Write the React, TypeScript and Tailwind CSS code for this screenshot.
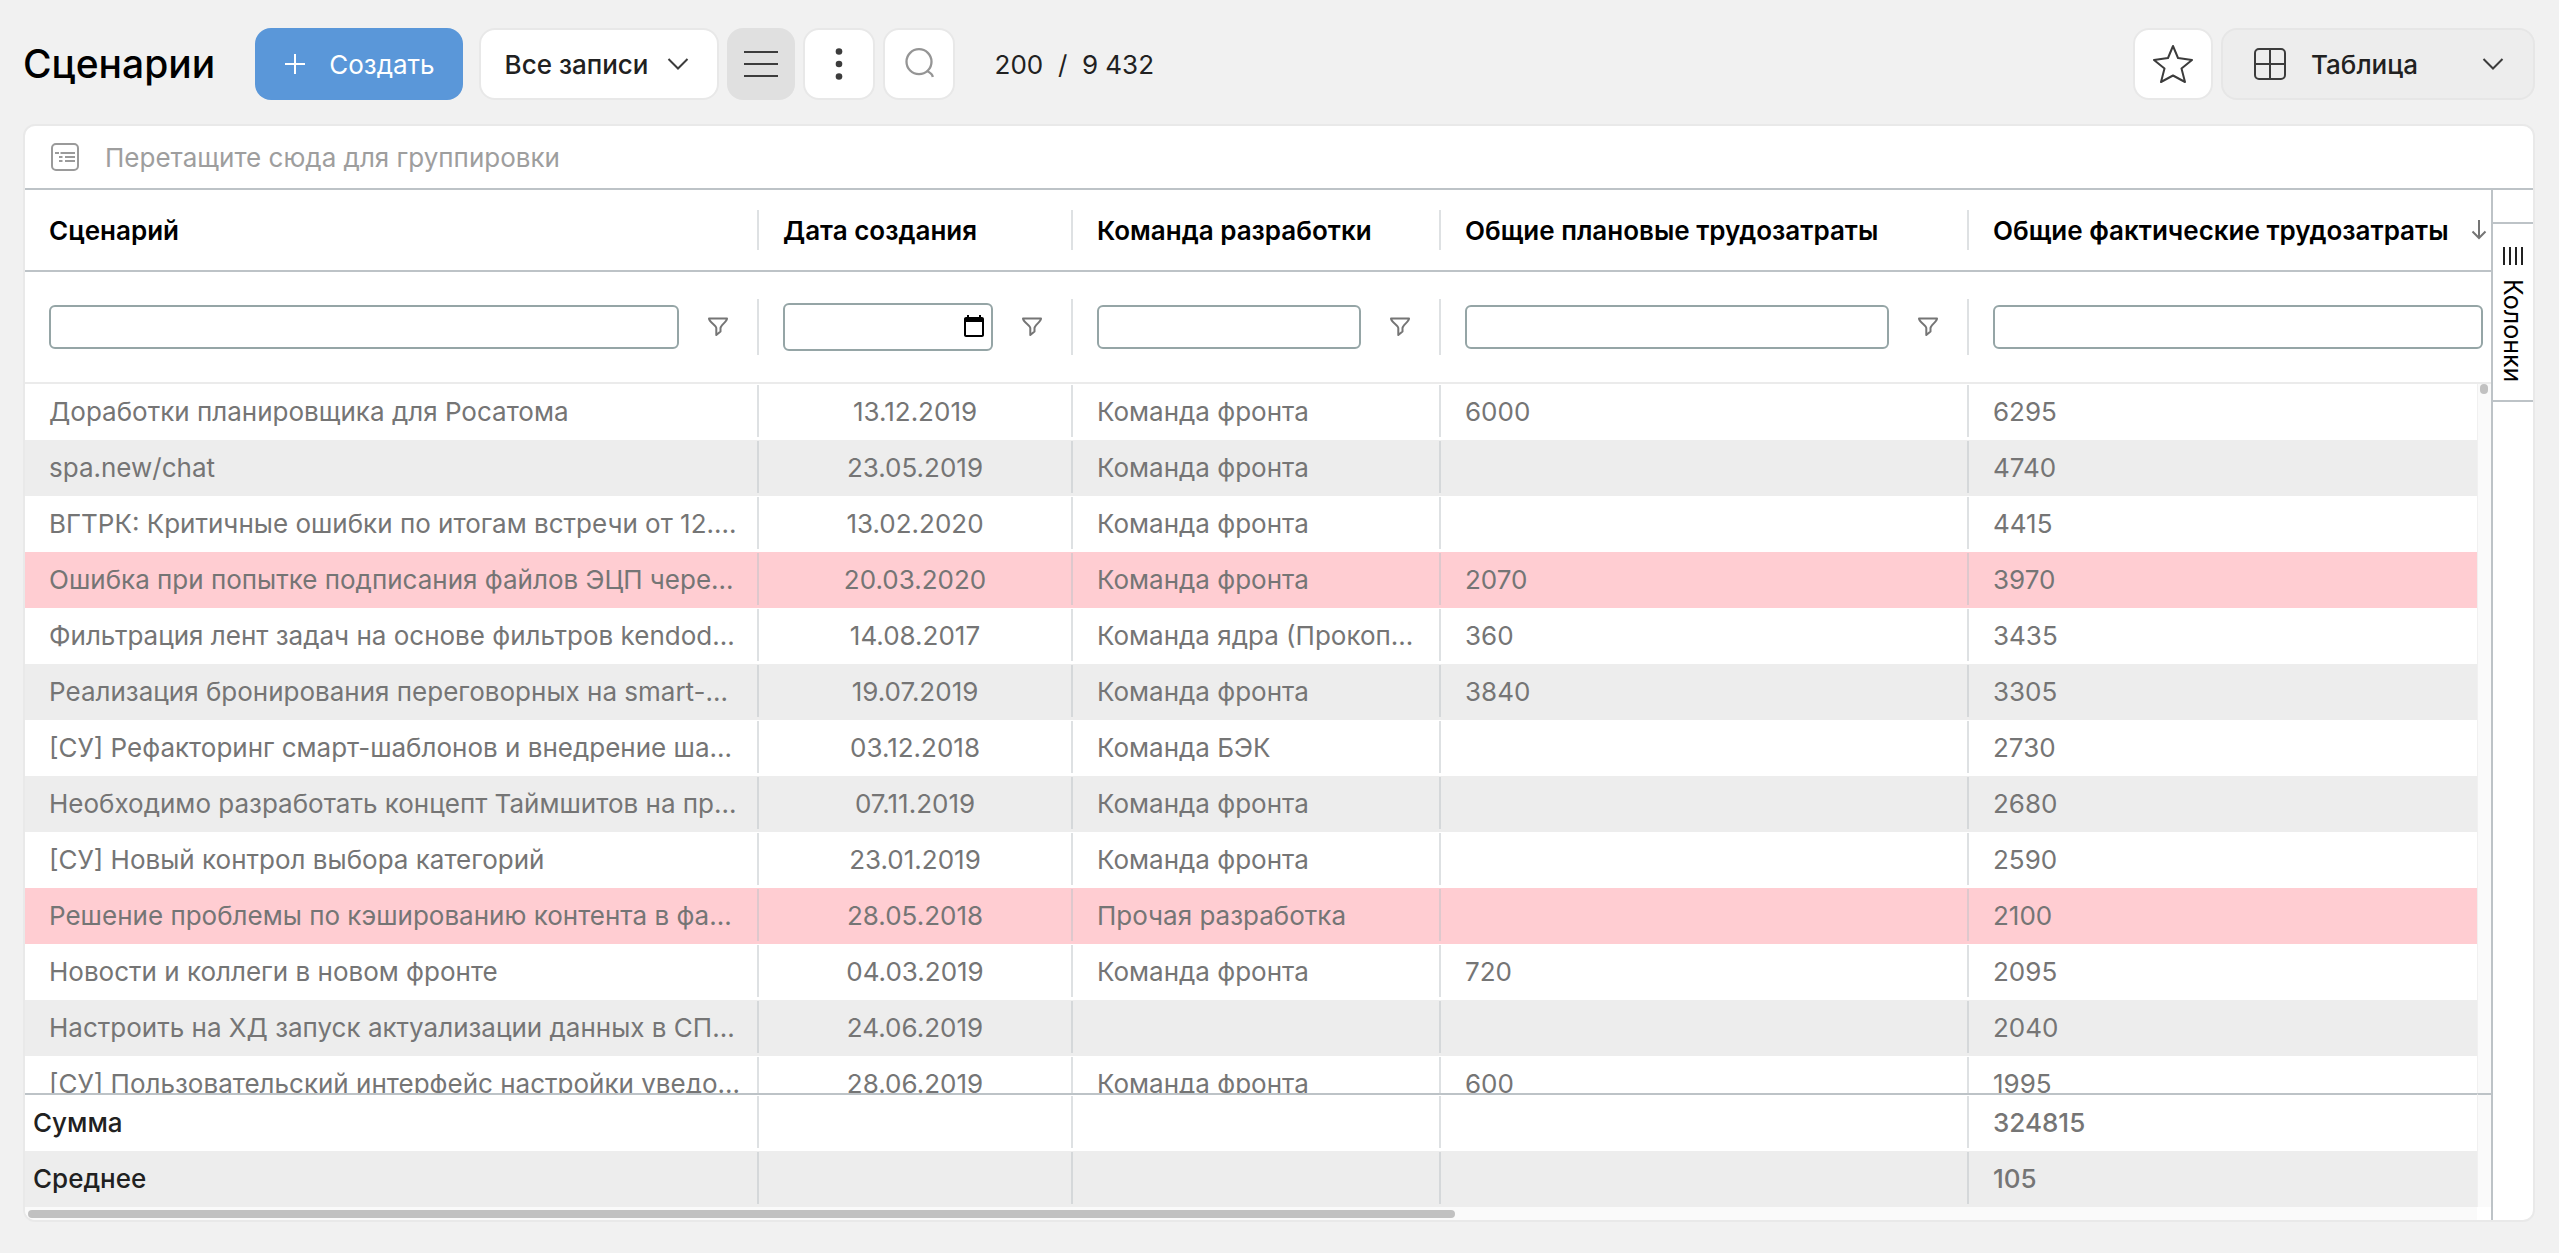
import type { ReactNode } from "react"
import { clsx } from "clsx"

type Row = {
  name: string
  date: string
  team: string
  plan: string
  fact: string
  alert?: boolean
}

const rows: Row[] = [
  { name: "Доработки планировщика для Росатома", date: "13.12.2019", team: "Команда фронта", plan: "6000", fact: "6295" },
  { name: "spa.new/chat", date: "23.05.2019", team: "Команда фронта", plan: "", fact: "4740" },
  { name: "ВГТРК: Критичные ошибки по итогам встречи от 12....", date: "13.02.2020", team: "Команда фронта", plan: "", fact: "4415" },
  { name: "Ошибка при попытке подписания файлов ЭЦП чере...", date: "20.03.2020", team: "Команда фронта", plan: "2070", fact: "3970", alert: true },
  { name: "Фильтрация лент задач на основе фильтров kendod...", date: "14.08.2017", team: "Команда ядра (Прокоп...", plan: "360", fact: "3435" },
  { name: "Реализация бронирования переговорных на smart-...", date: "19.07.2019", team: "Команда фронта", plan: "3840", fact: "3305" },
  { name: "[СУ] Рефакторинг смарт-шаблонов и внедрение ша...", date: "03.12.2018", team: "Команда БЭК", plan: "", fact: "2730" },
  { name: "Необходимо разработать концепт Таймшитов на пр...", date: "07.11.2019", team: "Команда фронта", plan: "", fact: "2680" },
  { name: "[СУ] Новый контрол выбора категорий", date: "23.01.2019", team: "Команда фронта", plan: "", fact: "2590" },
  { name: "Решение проблемы по кэшированию контента в фа...", date: "28.05.2018", team: "Прочая разработка", plan: "", fact: "2100", alert: true },
  { name: "Новости и коллеги в новом фронте", date: "04.03.2019", team: "Команда фронта", plan: "720", fact: "2095" },
  { name: "Настроить на ХД запуск актуализации данных в СП...", date: "24.06.2019", team: "", plan: "", fact: "2040" },
  { name: "[СУ] Пользовательский интерфейс настройки уведо...", date: "28.06.2019", team: "Команда фронта", plan: "600", fact: "1995" },
]

const columns = [
  { key: "name", title: "Сценарий" },
  { key: "date", title: "Дата создания" },
  { key: "team", title: "Команда разработки" },
  { key: "plan", title: "Общие плановые трудозатраты" },
  { key: "fact", title: "Общие фактические трудозатраты" },
]

function ChevronDown({ className }: { className?: string }) {
  return (
    <svg viewBox="0 0 22 12" fill="none" stroke="#3c3c3c" strokeWidth="2" className={clsx("pointer-events-none h-3 w-[22px]", className)}>
      <path d="M1.5 1 L11 10.5 L20.5 1" />
    </svg>
  )
}

function FunnelIcon() {
  return (
    <svg viewBox="0 0 20 20" fill="none" stroke="#757575" strokeWidth="2" strokeLinejoin="round" className="size-5">
      <path d="M1 1.5 H19 C19 5 12.5 8 12.5 11 V14.5 L8.3 18 V11 C8 8 1 5 1 1.5 Z" />
    </svg>
  )
}

function Toolbar() {
  return (
    <header className="flex h-[72px] items-center text-[26px] text-[#212121]">
      <h1 className="mr-10 text-[39px] font-medium text-black">Сценарии</h1>
      <button className="mr-4 flex h-full items-center gap-6 rounded-2xl bg-[#5a97d9] pr-7 pl-[30px] text-white">
        <svg viewBox="0 0 20 20" stroke="currentColor" strokeWidth="2" className="size-5">
          <path d="M10 0 V20 M0 10 H20" />
        </svg>
        Создать
      </button>
      <div className="relative mr-2 h-full">
        <select aria-label="Фильтр записей" className="h-full appearance-none rounded-2xl border-2 border-[#e8e8e8] bg-white pr-[68px] pl-6 font-medium">
          <option>Все записи</option>
        </select>
        <ChevronDown className="absolute top-[30px] right-[30px]" />
      </div>
      <div className="flex h-full gap-2">
        <button aria-label="Список" className="flex w-[68px] items-center justify-center rounded-2xl bg-[#e0e0e0]">
          <svg viewBox="0 0 34 26" stroke="#3c3c3c" strokeWidth="2" className="h-[26px] w-[34px]">
            <path d="M0 1 H34 M0 13 H34 M0 25 H34" />
          </svg>
        </button>
        <button aria-label="Ещё" className="flex w-[72px] items-center justify-center rounded-2xl border-2 border-[#e8e8e8] bg-white">
          <svg viewBox="0 0 8 32" fill="#3c3c3c" className="h-8 w-2">
            <circle cx="4" cy="3.5" r="3.3" />
            <circle cx="4" cy="16" r="3.3" />
            <circle cx="4" cy="28.5" r="3.3" />
          </svg>
        </button>
        <button aria-label="Поиск" className="flex w-[72px] items-center justify-center rounded-2xl border-2 border-[#e8e8e8] bg-white">
          <svg viewBox="0 0 30 32" fill="none" stroke="#959595" strokeWidth="2.3" className="h-8 w-[30px]">
            <circle cx="15" cy="13.7" r="12.5" />
            <path d="M23.2 23 C25 24 28.5 26.5 28.8 29" />
          </svg>
        </button>
      </div>
      <p className="ml-10 whitespace-pre">200  /  9 432</p>

      <div className="ml-auto flex h-full gap-2">
        <button aria-label="В избранное" className="flex w-20 items-center justify-center rounded-2xl border-2 border-[#e8e8e8] bg-white">
          <svg viewBox="0 0 40 40" fill="none" stroke="#3c3c3c" strokeWidth="2" strokeLinejoin="round" className="size-10">
            <path d="M20 2 L25 14 L39 16 L28.5 24.5 L32 38 L20 31.5 L8 38 L11.5 24.5 L1 16 L15 14 Z" />
          </svg>
        </button>
        <div className="relative">
          <svg viewBox="0 0 32 32" fill="none" stroke="#3c3c3c" strokeWidth="2" className="pointer-events-none absolute top-5 left-[33px] size-8">
            <rect x="1" y="1" width="30" height="30" rx="4" />
            <path d="M16 1 V31 M1 16 H31" />
          </svg>
          <select aria-label="Вид" className="h-full w-[314px] appearance-none rounded-2xl border-2 border-[#e6e6e6] bg-[#ededed] pl-[88px] font-medium">
            <option>Таблица</option>
          </select>
          <ChevronDown className="absolute top-[30px] right-[31px]" />
        </div>
      </div>
    </header>
  )
}

type CellProps = {
  children?: ReactNode
  divider?: boolean
  center?: boolean
  className?: string
}

function Cell({ children, divider = true, center = false, className }: CellProps) {
  return (
    <td className={clsx("h-14 p-0", className)}>
      <div className="flex h-14 pt-px pb-[3px]">
        <div className={clsx("w-full min-w-0 truncate leading-[54px]", center ? "text-center" : "pl-6", divider && "border-r-2 border-[#bdc3c7]/50")}>
          {children}
        </div>
      </div>
    </td>
  )
}

function TotalLabel({ children, className }: { children: ReactNode; className?: string }) {
  return (
    <th scope="row" className={clsx("p-0 font-medium text-[#212121]", className)}>
      <div className="flex h-14 pt-px pb-[3px]">
        <div className="w-full border-r-2 border-[#bdc3c7]/50 pl-2 leading-[54px]">{children}</div>
      </div>
    </th>
  )
}

function Gutter({ children, className }: { children?: ReactNode; className?: string }) {
  return <td className={clsx("border-l border-l-[#f0f0f0] bg-[#fafafa] p-0 align-top", className)}>{children}</td>
}

function Grid() {
  return (
    <div className="min-h-0 flex-1 overflow-hidden">
      <table className="w-full table-fixed border-separate border-spacing-0 text-left text-[#757575]">
        <colgroup>
          <col className="w-[734px]" />
          <col className="w-[314px]" />
          <col className="w-[368px]" />
          <col className="w-[528px]" />
          <col />
          <col className="w-[14px]" />
        </colgroup>
        <thead className="sticky top-0 z-10 bg-white text-black">
          <tr>
            {columns.map((column, i) => {
              const last = i === columns.length - 1
              return (
                <th key={column.key} colSpan={last ? 2 : 1} className="h-[82px] border-b-2 border-[#bdc3c7] p-0 font-semibold">
                  <div className={clsx("flex h-10 items-center justify-between pl-6 whitespace-nowrap", last ? "pr-1" : "border-r-2 border-[#bdc3c7]/50")}>
                    {column.title}
                    {last && (
                      <svg viewBox="0 0 16 20" fill="none" stroke="#757575" strokeWidth="2" className="h-5 w-4">
                        <path d="M8 0 V18 M1.5 11.5 L8 18 L14.5 11.5" />
                      </svg>
                    )}
                  </div>
                </th>
              )
            })}
          </tr>
          <tr>
            {columns.map((column, i) => {
              const last = i === columns.length - 1
              const isDate = column.key === "date"
              return (
                <td key={column.key} colSpan={last ? 2 : 1} className="h-28 border-b-2 border-[#ebebeb] p-0">
                  <div className={clsx("flex h-14 items-center pl-6", last ? "pr-2" : "border-r-2 border-[#bdc3c7]/50")}>
                    <input
                      type={isDate ? "date" : "text"}
                      aria-label={column.title}
                      className={clsx(
                        "min-w-0 flex-1 rounded-md border-2 border-[#95a5a6] bg-white [&::-webkit-datetime-edit]:opacity-0",
                        isDate ? "h-12 pr-[2px]" : "h-11 px-2",
                      )}
                    />
                    {!last && (
                      <button aria-label="Условие фильтра" className="flex w-[78px] justify-center">
                        <FunnelIcon />
                      </button>
                    )}
                  </div>
                </td>
              )
            })}
          </tr>
        </thead>
        <tbody>
          {rows.map((row, i) => (
            <tr key={row.name} className={row.alert ? "bg-[#ffcdd2]" : i % 2 ? "bg-[#ededed]" : "bg-white"}>
              <Cell>{row.name}</Cell>
              <Cell center>{row.date}</Cell>
              <Cell>{row.team}</Cell>
              <Cell>{row.plan}</Cell>
              <Cell divider={false}>{row.fact}</Cell>
              <Gutter>{i === 0 && <div className="mx-auto h-[10px] w-2 rounded-full bg-[#c1c1c1]" />}</Gutter>
            </tr>
          ))}
        </tbody>
        <tfoot className="sticky bottom-0 font-medium">
          <tr className="bg-white">
            <TotalLabel className="border-t-2 border-[#bdc3c7]">Сумма</TotalLabel>
            <Cell className="border-t-2 border-[#bdc3c7]" />
            <Cell className="border-t-2 border-[#bdc3c7]" />
            <Cell className="border-t-2 border-[#bdc3c7]" />
            <Cell divider={false} className="border-t-2 border-[#bdc3c7]">324815</Cell>
            <Gutter className="border-t-2 border-t-[#bdc3c7]" />
          </tr>
          <tr className="bg-[#ededed]">
            <TotalLabel>Среднее</TotalLabel>
            <Cell />
            <Cell />
            <Cell />
            <Cell divider={false}>105</Cell>
            <Gutter />
          </tr>
        </tfoot>
      </table>
    </div>
  )
}

export default function App() {
  return (
    <div className="flex h-screen flex-col gap-6 bg-[#f1f1f1] pt-7 pr-6 pb-[31px] pl-[23px] font-['Inter','Liberation_Sans',sans-serif] text-[26px]">
      <Toolbar />
      <main className="flex min-h-0 flex-1 flex-col overflow-hidden rounded-xl border-2 border-[#e9e9e9] bg-white">
        {/* Row group drop zone */}
        <div className="flex h-16 shrink-0 items-center gap-[26px] border-b-2 border-[#bdc3c7] pl-[26px] text-[#9e9e9e]">
          <svg viewBox="0 0 28 28" fill="none" stroke="#9a9a9a" strokeWidth="2" className="size-7">
            <rect x="1" y="1" width="26" height="26" rx="4" />
            <path d="M4 10 H8 M9.5 10 H24 M8 14 H11.5 M14 14 H24 M8 18 H11.5 M14 18 H24" />
          </svg>
          Перетащите сюда для группировки
        </div>

        <div className="flex min-h-0 flex-1">
          <div className="flex min-w-0 flex-1 flex-col">
            <Grid />
            {/* Horizontal scrollbar */}
            <div className="mr-[14px] h-[13px] shrink-0 bg-[#fafafa] px-[3px] pt-[3px]">
              <div className="h-2 w-7/12 rounded-full bg-[#c1c1c1]" />
            </div>
          </div>

          <aside className="w-[42px] shrink-0 border-l-2 border-[#bdc3c7] pt-8">
            <button className="flex h-[180px] w-full flex-col items-center gap-[14px] border-y-2 border-[#bdc3c7] pt-[23px] text-black">
              <svg viewBox="0 0 22 18" stroke="#212121" strokeWidth="2" className="h-[18px] w-[22px] shrink-0">
                <path d="M2 0 V18 M8 0 V18 M14 0 V18 M20 0 V18" />
              </svg>
              <span className="text-[25px] leading-10 [writing-mode:vertical-rl]">Колонки</span>
            </button>
          </aside>
        </div>
      </main>
    </div>
  )
}
